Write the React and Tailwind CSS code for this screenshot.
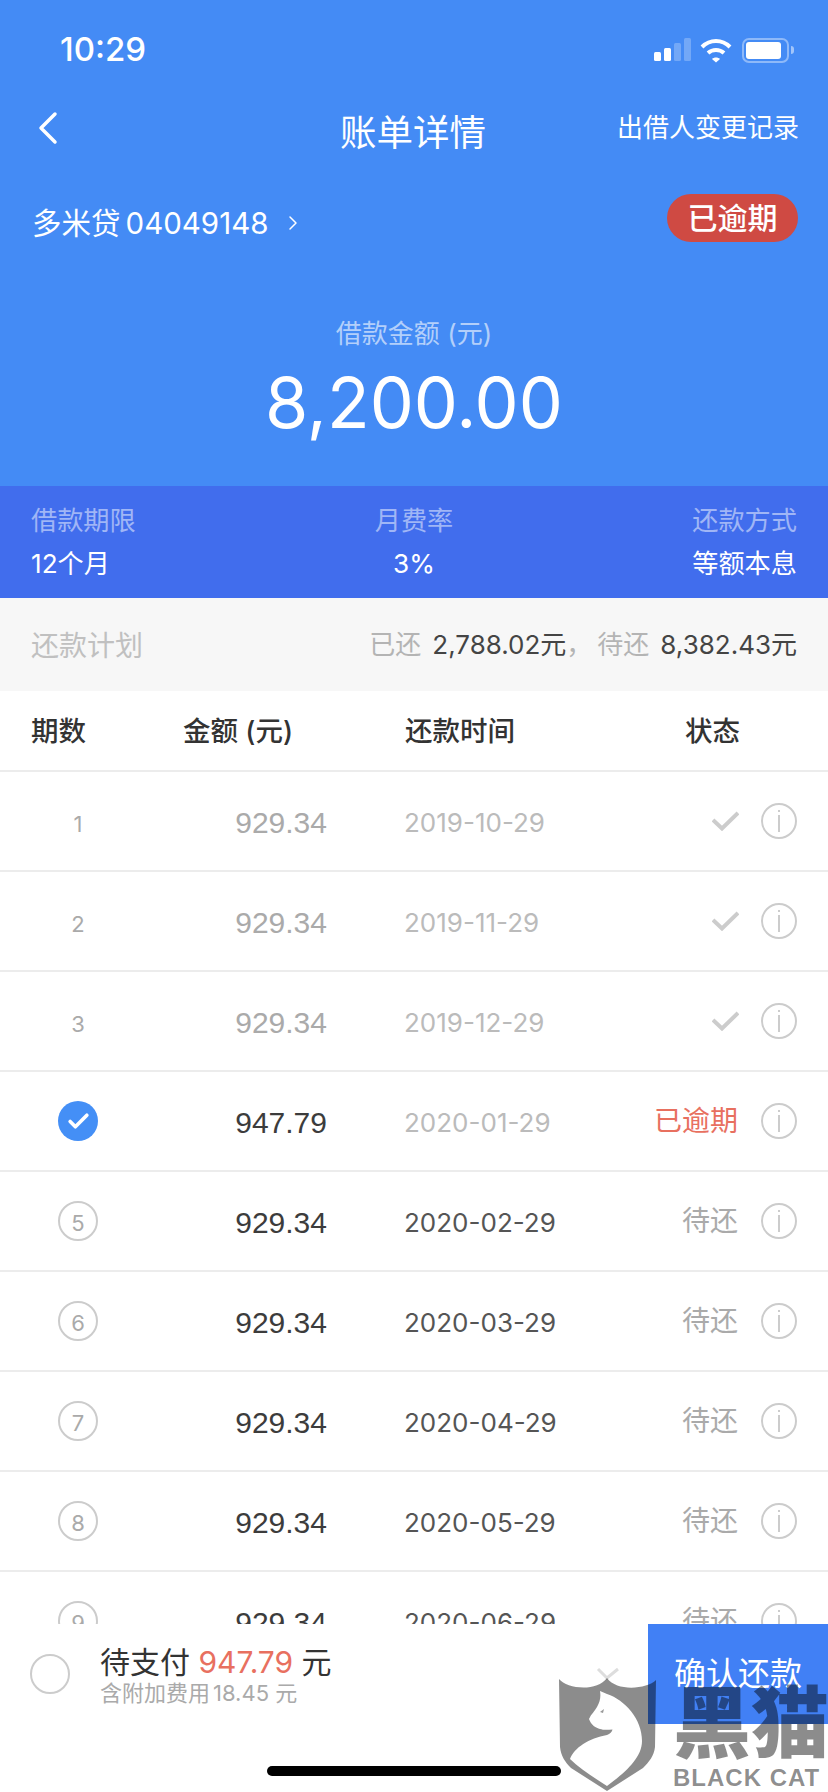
import { Check, ChevronLeft, ChevronRight } from 'lucide-react'

const sans = "font-['Inter','Noto_Sans_CJK_SC',sans-serif]"

const rows = [
  { no: '1', amount: '929.34', date: '2019-10-29', state: 'paid' },
  { no: '2', amount: '929.34', date: '2019-11-29', state: 'paid' },
  { no: '3', amount: '929.34', date: '2019-12-29', state: 'paid' },
  { no: '4', amount: '947.79', date: '2020-01-29', state: 'late' },
  { no: '5', amount: '929.34', date: '2020-02-29', state: 'todo' },
  { no: '6', amount: '929.34', date: '2020-03-29', state: 'todo' },
  { no: '7', amount: '929.34', date: '2020-04-29', state: 'todo' },
  { no: '8', amount: '929.34', date: '2020-05-29', state: 'todo' },
  { no: '9', amount: '929.34', date: '2020-06-29', state: 'todo' },
]

function StatusBar() {
  return (
    <div className="flex items-center justify-between h-[100px] pl-[60px] pr-[34px]">
      <span className="text-[33px] font-medium text-white">10:29</span>
      <div className="flex items-center">
        <svg width="38" height="24" viewBox="0 0 38 24" fill="#fff">
          <rect x="0" y="14" width="7" height="9" rx="1.5" />
          <rect x="10" y="10" width="7" height="13" rx="1.5" />
          <rect x="20" y="5" width="7" height="18" rx="1.5" opacity="0.25" />
          <rect x="30" y="0" width="7" height="23" rx="1.5" opacity="0.25" />
        </svg>
        <svg className="ml-[8px]" width="32" height="25" viewBox="0 0 32 25" fill="none" stroke="#fff" strokeWidth="4">
          <path d="M2 9 C 10 1, 22 1, 30 9" />
          <path d="M8 15 C 12.500 11, 19.500 11, 24 15" />
          <path d="M12 21 L16 24.500 L20 21 C 18 19, 14 19, 12 21 Z" fill="#fff" stroke="none" />
        </svg>
        <div className="ml-[10px] w-[47px] h-[25px] rounded-[7px] border-2 border-white/40 p-[2px]">
          <div className="w-[35px] h-full rounded-[3px] bg-white" />
        </div>
        <div className="ml-[2px] w-[3px] h-[8px] rounded-r-full bg-white/50" />
      </div>
    </div>
  )
}

function Header() {
  return (
    <div className="bg-[#448bf5] text-white h-[486px]">
      <StatusBar />
      <div className="relative flex items-center justify-between h-[60px] pl-[24px] pr-[29px]">
        <ChevronLeft size={56} strokeWidth={1.5} className="-ml-[4px] -mt-[4px]" />
        <h1 className="absolute left-[340px] top-[9px] text-[36.500px] leading-[48px] font-normal">账单详情</h1>
        <span className="text-[26px] -mt-[6px]">出借人变更记录</span>
      </div>
      <div className="flex items-center justify-between mt-[34px] pl-[32px] pr-[30px] h-[48px]">
        <div className="flex items-center text-[29.500px] mt-[10px]">
          <span>
            多米贷<span className="ml-[5px]">04049148</span>
          </span>
          <ChevronRight size={24} strokeWidth={1.5} className="ml-[13px]" />
        </div>
        <div className="flex items-center justify-center w-[131px] h-[48px] rounded-full bg-[#cf4a43] text-[30px] font-medium">
          已逾期
        </div>
      </div>
      <div className="mt-[74px] text-center">
        <p className="text-[26px] leading-[36px] text-white/60">借款金额 (元)</p>
        <p className="text-[70px] leading-[84px] mt-[9px]">8,200.00</p>
      </div>
    </div>
  )
}

function Terms() {
  return (
    <div className="flex justify-between h-[112px] px-[31px] pt-[17px] bg-[#416ded] text-[26.200px] leading-[36px] text-white">
      <div>
        <p className="text-white/50">借款期限</p>
        <p className="mt-[7px]">12个月</p>
      </div>
      <div className="text-center">
        <p className="text-white/50">月费率</p>
        <p className="mt-[7px]">3%</p>
      </div>
      <div className="text-right">
        <p className="text-white/50">还款方式</p>
        <p className="mt-[7px]">等额本息</p>
      </div>
    </div>
  )
}

function PlanSummary() {
  return (
    <div className="flex items-center justify-between h-[93px] px-[31px] bg-[#f7f7f7]">
      <span className="text-[28px] mt-[3px] text-[#c0c0c0]">还款计划</span>
      <div className="flex text-[26px] text-[#444]">
        <span className="text-[#b4b4b4]">已还</span>
        <span className="ml-[11px]">2,788.02元</span>
        <span className="w-[31px] text-[#b4b4b4]">，</span>
        <span className="text-[#b4b4b4]">待还</span>
        <span className="ml-[11px]">8,382.43元</span>
      </div>
    </div>
  )
}

function TableHead() {
  return (
    <div className="flex items-center h-[81px] pt-[3px] border-b-2 border-[#ececec] text-[27.500px] font-medium text-[#333]">
      <span className="w-[183px] pl-[31px]">期数</span>
      <span className="w-[222px]">金额 (元)</span>
      <span className="w-[280px]">还款时间</span>
      <span>状态</span>
    </div>
  )
}

function RowMark({ row }) {
  if (row.state === 'paid') {
    return <span className="text-[22px] pt-[7px] text-[#aaa]">{row.no}</span>
  }
  if (row.state === 'late') {
    return (
      <div className="flex items-center justify-center w-10 h-10 rounded-full bg-[#448ff6] text-white">
        <Check size={25} strokeWidth={3.5} />
      </div>
    )
  }
  return (
    <div className="flex items-center justify-center w-10 h-10 pt-[5px] rounded-full border-2 border-[#ccc] text-[22px] text-[#aaa]">
      {row.no}
    </div>
  )
}

function Row({ row }) {
  const paid = row.state === 'paid'
  return (
    <div className="flex items-center h-[100px] shrink-0 border-b-2 border-[#ececec]">
      <div className="flex justify-center w-10 ml-[58px]">
        <RowMark row={row} />
      </div>
      <span
        className={`w-[229px] pt-[3px] text-right text-[30px] font-['Liberation_Sans',sans-serif] ${
          paid ? 'text-[#aaa]' : 'text-[#3c3c3c]'
        }`}
      >
        {row.amount}
      </span>
      <span className={`ml-[77px] pt-[3px] w-[251px] text-[26px] ${paid || row.state === 'late' ? 'text-[#bbb]' : 'text-[#555]'}`}>
        {row.date}
      </span>
      <div className="flex items-center justify-end w-[83px] text-[28px]">
        {paid && (
          <svg className="-mr-[1px]" width="27" height="20" viewBox="0 0 27 20" fill="none" stroke="#ccc" strokeWidth="4">
            <path d="M1 9 L10 17.500 L26 2" />
          </svg>
        )}
        {row.state === 'late' && <span className="text-[#e8705f] whitespace-nowrap">已逾期</span>}
        {row.state === 'todo' && <span className="text-[#aaa]">待还</span>}
      </div>
      <div className="flex items-center justify-center w-9 h-9 ml-[23px] rounded-full border-2 border-[#ccc]">
        <div className="flex flex-col items-center gap-[3px]">
          <div className="w-[2px] h-[2px] bg-[#ccc]" />
          <div className="w-[2px] h-[17px] bg-[#ccc]" />
        </div>
      </div>
    </div>
  )
}

function Watermark() {
  return (
    <div className="absolute left-[559px] top-[1664px] flex pointer-events-none">
      <svg width="98" height="128" viewBox="0 0 98 128">
        <path d="M39 5 L48 14 L59 5" fill="none" stroke="#ddd" strokeWidth="3" />
        <path
          d="M0 15 C 8 25, 38 28, 48 14 C 58 28, 88 25, 97 16 L96 83 C 95 92, 90 98, 84 104 L48 127 L12 104 C 6 98, 2 92, 1 83 Z"
          fill="#000"
          fillOpacity="0.45"
        />
        <path
          d="M41 27 L48 30 C 66 36, 83 55, 83 77 C 83 95, 64 110, 48 122 C 34 113, 20 104, 11 95 C 15 84, 30 74, 48 71 C 51 70, 53 68, 53.500 65.500 C 48 66, 44 66, 41 65 C 37 64, 32 61, 30 55 C 32 50, 36 47, 38 43 C 41 38, 42 33, 41 27 Z"
          fill="#fff"
        />
        <path d="M41 48 L45 45 L44 49 Z" fill="#999" />
      </svg>
      <div className="ml-[16px] w-[155px] overflow-hidden text-black/45 font-['Noto_Sans_CJK_SC',sans-serif]">
        <p className="text-[78px] leading-[78px] font-black mt-[15px] whitespace-nowrap">黑猫</p>
        <p className="text-[24px] leading-[24px] tracking-[1px] font-bold mt-[9px] whitespace-nowrap font-['Liberation_Sans',sans-serif]">
          BLACK CAT
        </p>
      </div>
    </div>
  )
}

function PayBar() {
  return (
    <div className="relative flex items-start h-[168px] shrink-0 bg-white">
      <div className="w-10 h-10 ml-[30px] mt-[30px] rounded-full border-2 border-[#ccc]" />
      <div className="ml-[30px] mt-[18px]">
        <p className="text-[30px] leading-[40px] text-[#333]">
          待支付 <span className="text-[#e8705f]">947.79</span> 元
        </p>
        <p className="text-[22px] leading-[28px] -mt-[3px] text-[#aaa]">
          含附加费用<span className="ml-[3px]">18.45 元</span>
        </p>
      </div>
      <button className="ml-auto w-[180px] h-[100px] bg-[#4180f5] text-[32px] text-white">确认还款</button>
      <div className="absolute left-[267px] top-[142px] w-[294px] h-[10px] rounded-full bg-black" />
    </div>
  )
}

export default function App() {
  return (
    <div className={`relative flex flex-col w-[828px] h-[1792px] overflow-hidden bg-white ${sans}`}>
      <Header />
      <Terms />
      <PlanSummary />
      <TableHead />
      <div className="flex-1 overflow-hidden">
        {rows.map((row) => (
          <Row key={row.no} row={row} />
        ))}
      </div>
      <PayBar />
      <Watermark />
    </div>
  )
}
